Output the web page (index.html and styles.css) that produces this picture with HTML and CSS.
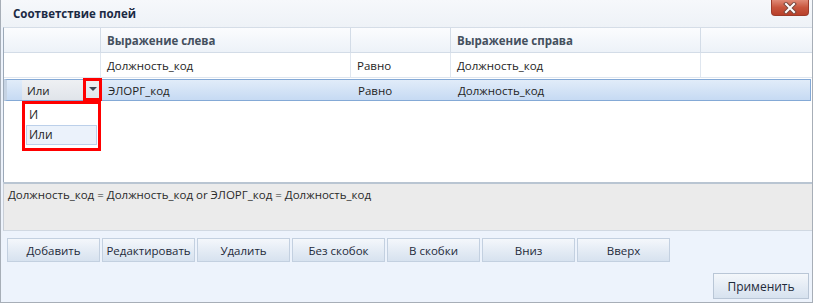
FILE: index.html
```html
<!DOCTYPE html>
<html>
<head>
  <meta charset="utf-8">
  <title>Соответствие полей</title>
  <link rel="stylesheet" href="styles.css">
</head>
<body>
  <div class="window">
    <div class="titlebar">
      <span class="title">Соответствие полей</span>
      <button class="close-button">
        <svg width="16" height="12" viewBox="0 0 16 12">
          <path d="M4 2 L12 10 M12 2 L4 10" stroke="#7a4a40" stroke-width="4" stroke-linecap="square"/>
          <path d="M4 2 L12 10 M12 2 L4 10" stroke="#ffffff" stroke-width="2" stroke-linecap="square"/>
        </svg>
      </button>
    </div>

    <div class="grid">
      <div class="grid-row grid-head">
        <div class="cell c0"></div>
        <div class="cell c1">Выражение слева</div>
        <div class="cell c2"></div>
        <div class="cell c3">Выражение справа</div>
        <div class="cell c4"></div>
      </div>
      <div class="grid-row">
        <div class="cell c0"></div>
        <div class="cell c1">Должность_код</div>
        <div class="cell c2">Равно</div>
        <div class="cell c3">Должность_код</div>
        <div class="cell c4"></div>
      </div>
      <div class="grid-row selected">
        <div class="cell c0">
          <div class="combo">
            <span class="combo-text">Или</span>
            <span class="combo-arrow"></span>
          </div>
        </div>
        <div class="cell c1">ЭЛОРГ_код</div>
        <div class="cell c2">Равно</div>
        <div class="cell c3">Должность_код</div>
        <div class="cell c4"></div>
      </div>

      <div class="dropdown">
        <div class="dropdown-item">И</div>
        <div class="dropdown-item active">Или</div>
      </div>
    </div>

    <div class="expression">
      Должность_код = Должность_код or ЭЛОРГ_код = Должность_код
    </div>

    <div class="bottom-panel">
      <div class="button-group">
        <button class="btn">Добавить</button>
        <button class="btn">Редактировать</button>
        <button class="btn">Удалить</button>
        <button class="btn">Без скобок</button>
        <button class="btn">В скобки</button>
        <button class="btn">Вниз</button>
        <button class="btn">Вверх</button>
      </div>
      <div class="apply-row">
        <button class="btn apply">Применить</button>
      </div>
    </div>
  </div>
</body>
</html>
```

FILE: styles.css
```css
/* Field mapping dialog */
html, body {
  margin: 0;
  padding: 0;
  background: #ffffff;
  font-family: 'Open Sans', 'Noto Sans', sans-serif;
  font-size: 11.5px;
  color: #1e1e1e;
}

.window {
  width: 811px;
  height: 302px;
  border: 1px solid #a7aeb7;
  border-top: none;
  background: #edf3fc;
  display: flex;
  flex-direction: column;
}

.titlebar {
  height: 27px;
  flex-shrink: 0;
  display: flex;
  align-items: center;
  justify-content: space-between;
  padding-left: 12px;
  background: linear-gradient(#f6f8fb, #eef2f7);
  position: relative;
}

.title {
  font-weight: 700;
  font-size: 11.5px;
  color: #1b2a44;
}

.close-button {
  align-self: flex-start;
  width: 38px;
  height: 16px;
  margin-right: 3px;
  padding: 0;
  border: 1px solid #9c3b2a;
  border-top: none;
  border-radius: 0 0 4px 4px;
  background: linear-gradient(#e08a76, #c8553d 50%, #b8402a);
  display: flex;
  align-items: center;
  justify-content: center;
}

/* Grid */
.grid {
  height: 155px;
  flex-shrink: 0;
  margin-left: 2px;
  background: #ffffff;
  border-left: 1px solid #9ca9b8;
  border-top: 1px solid #d5dde7;
  box-sizing: border-box;
  position: relative;
}

.grid-row {
  display: flex;
  height: 24px;
  border-bottom: 1px solid #dfe6ef;
}

.grid-head {
  height: 24px;
  background: linear-gradient(#fbfcfe, #edf2f8);
  border-bottom: 1px solid #d3dce7;
  font-weight: 700;
  color: #44505e;
}

.cell {
  display: flex;
  align-items: center;
  padding-left: 6px;
  box-sizing: border-box;
  border-right: 1px solid #dfe6ef;
  white-space: nowrap;
}

.grid-head .cell {
  border-right-color: #d3dce7;
}

.c0 { width: 97px; padding-left: 0; }
.c1 { width: 250px; }
.c2 { width: 100px; }
.c3 { width: 250px; }
.c4 { flex: 1; border-right: none; }

.grid-row.selected {
  height: 20px;
  margin-top: 1px;
  margin-right: 1px;
  background: linear-gradient(#e1ecf9, #c6daf3);
  border: 1px solid #84a9d6;
  border-left: 3px solid #c6d3e3;
}

.grid-row.selected .cell {
  border-right: none;
}

.grid-row.selected .c0 {
  width: 95px;
  padding-left: 15px;
}

.combo {
  width: 78px;
  height: 20px;
  display: flex;
  align-items: center;
  justify-content: space-between;
  background: linear-gradient(#eef0f3, #e0e4ea);
  box-sizing: border-box;
  padding-left: 5px;
  position: relative;
}

.combo-arrow {
  width: 13px;
  height: 17px;
  margin-top: -2px;
  border: 3px solid #ff0000;
  display: flex;
  align-items: center;
  justify-content: center;
  margin-right: -2px;
}

.combo-arrow::after {
  content: '';
  border-left: 4px solid transparent;
  border-right: 4px solid transparent;
  border-top: 4px solid #3c4654;
}

.dropdown {
  position: absolute;
  left: 18px;
  top: 73px;
  width: 72px;
  height: 43px;
  border: 3px solid #ff0000;
  background: #ffffff;
  padding: 1px 0 0 1px;
  box-sizing: content-box;
  font-size: 12px;
}

.dropdown-item {
  height: 20px;
  line-height: 20px;
  padding-left: 3px;
  margin-right: 1px;
}

.dropdown-item.active {
  background: #ebf2fb;
  border: 1px solid #bcd0ea;
  height: 18px;
  line-height: 18px;
  padding-left: 2px;
}

/* Expression bar */
.expression {
  height: 49px;
  flex-shrink: 0;
  margin-left: 2px;
  background: #ebebeb;
  border-top: 2px solid #b9c5d2;
  border-bottom: 1px solid #d0d8e2;
  border-left: 1px solid #c8ced6;
  padding: 3px 0 0 4px;
  box-sizing: border-box;
  color: #2a2a2a;
}

/* Bottom panel */
.bottom-panel {
  flex: 1;
  padding: 7px 0 0 6px;
  display: flex;
  flex-direction: column;
}

.button-group {
  display: flex;
  gap: 2px;
}

.btn {
  width: 93px;
  height: 24px;
  padding: 0;
  border: 1px solid #c3d0e0;
  background: linear-gradient(#f4f7fb, #e2eaf4 60%, #d7e2ef);
  font-family: inherit;
  font-size: 11.5px;
  color: #1e2a3a;
}

.apply-row {
  display: flex;
  justify-content: flex-end;
  margin-top: 11px;
  padding-right: 3px;
}

.apply {
  width: 96px;
  height: 26px;
  font-size: 12px;
  border-color: #b9c6d6;
}
```
